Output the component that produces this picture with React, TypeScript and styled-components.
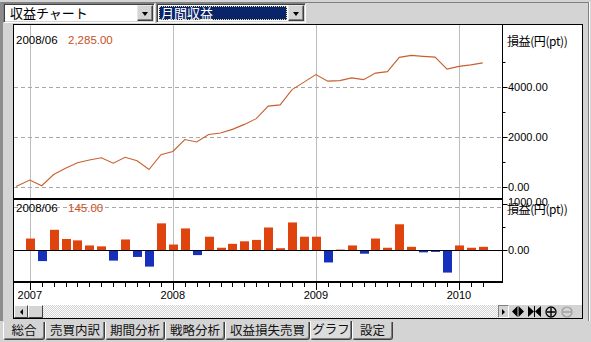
import React from 'react';
import styled, { createGlobalStyle } from 'styled-components';

const GRAY = '#d4d4d4';
const UI_FONT = `"Noto Sans CJK JP", "Liberation Sans", sans-serif`;
const NUM_FONT = `"Liberation Sans", "Noto Sans CJK JP", sans-serif`;

const GlobalStyle = createGlobalStyle`
  html, body { margin: 0; padding: 0; background: ${GRAY}; }
  #root { width: 591px; height: 342px; overflow: hidden; }
`;

const bars = [
  260, -230, 450, 250, 220, 110, 90, -220, 240, -140, -350, 590,
  130, 480, -100, 300, 60, 145, 200, 230, 500, 50, 610, 300,
  300, -260, 20, 110, -70, 260, 60, 570, 80, -40, -30, -480,
  110, 60, 80,
];

const X0 = 29.8;
const DX = 11.92;
const xm = (i: number) => X0 + DX * i;
const px = (v: number) => Math.round(v) + 0.5;
const yTop = (v: number) => 186.5 - v * 0.025;
const yBot = (v: number) => 250.5 - v * 0.046;
const AXIS_X = 502.5;
const PLOT_L = 14;
const years = [
  { i: 0, label: '2007' },
  { i: 12, label: '2008' },
  { i: 24, label: '2009' },
  { i: 36, label: '2010' },
];

const Window = styled.div`
  width: 591px;
  height: 342px;
  box-sizing: border-box;
  padding-top: 2px;
  background: ${GRAY};
  display: flex;
  flex-direction: column;
`;

const Frame = styled.div`
  width: 589px;
  height: 319px;
  box-sizing: border-box;
  border-top: 1px solid #808080;
  border-left: 3px solid #8c8c8c;
  border-right: 1px solid #808080;
  box-shadow: 1px 0 0 #fff;
  display: flex;
  flex-direction: column;
`;

const Toolbar = styled.div`
  height: 20px;
  display: flex;
  gap: 1px;
  align-items: flex-start;
`;

const Combo = styled.div<{ $w: number }>`
  width: ${(p) => p.$w}px;
  height: 20px;
  box-sizing: border-box;
  background: #fff;
  border: 1px solid;
  border-color: #808080 #fff #fff #808080;
  box-shadow: inset 1px 1px #404040, inset -1px -1px ${GRAY};
  padding: 1px;
  display: flex;
  align-items: stretch;
`;

const ComboText = styled.div<{ $selected?: boolean }>`
  flex: 1;
  margin: 1px;
  padding-left: ${(p) => (p.$selected ? 2 : 4)}px;
  font: 13px/14px ${UI_FONT};
  color: ${(p) => (p.$selected ? '#fff' : '#000')};
  background: ${(p) => (p.$selected ? '#0a246a' : 'transparent')};
  outline: ${(p) => (p.$selected ? '1px dotted #e8e0a0' : 'none')};
  outline-offset: -1px;
  display: flex;
  align-items: center;
  white-space: nowrap;
`;

const DropBtn = styled.div`
  width: 16px;
  box-sizing: border-box;
  background: ${GRAY};
  border: 1px solid;
  border-color: #e8e8e8 #404040 #404040 #e8e8e8;
  box-shadow: inset -1px -1px #808080;
  display: flex;
  align-items: center;
  justify-content: center;
`;

const Arrow = styled.span`
  width: 0;
  height: 0;
  border-left: 3.5px solid transparent;
  border-right: 3.5px solid transparent;
  border-top: 4px solid #000;
  margin-top: 1px;
`;

const ChartBox = styled.div`
  margin: 1px 0 0 10px;
  width: 570px;
  box-sizing: border-box;
  border: 1px solid #000;
  background: #fff;
  display: flex;
  flex-direction: column;
`;

const PaneSvg = styled.svg`
  display: block;
  font-family: ${NUM_FONT};
`;

const ScrollRow = styled.div`
  height: 13px;
  display: flex;
  align-items: stretch;
  background: ${GRAY};
`;

const ScrollBtn = styled.div<{ $w: number; $flat?: boolean }>`
  width: ${(p) => p.$w}px;
  box-sizing: border-box;
  background: ${GRAY};
  border: 1px solid;
  border-color: ${(p) => (p.$flat ? '#808080 #fff #fff #808080' : '#fff #404040 #404040 #fff')};
  display: flex;
  align-items: center;
  justify-content: center;
`;

const SmallArrow = styled.span<{ $dir: 'l' | 'r' }>`
  width: 0;
  height: 0;
  border-top: 3px solid transparent;
  border-bottom: 3px solid transparent;
  ${(p) => (p.$dir === 'l' ? 'border-right: 3px solid #000;' : 'border-left: 3px solid #000;')}
`;

const Track = styled.div`
  flex: 1;
  background: repeating-conic-gradient(${GRAY} 0 25%, #fff 0 50%) 0 0 / 2px 2px;
`;

const ToolIcons = styled.div`
  width: 70px;
  display: flex;
  align-items: center;
  gap: 4px;
  padding-left: 3px;
  background: ${GRAY};
`;

const TabBar = styled.div`
  height: 21px;
  display: flex;
  padding-left: 3px;
  align-items: flex-start;
`;

const Tab = styled.div<{ $w: number; $active?: boolean }>`
  width: ${(p) => p.$w}px;
  height: ${(p) => (p.$active ? 19 : 18)}px;
  margin-top: ${(p) => (p.$active ? 0 : 1)}px;
  box-sizing: border-box;
  border-left: 1px solid #fff;
  border-right: 1px solid #404040;
  border-bottom: 1px solid #404040;
  border-radius: 0 0 3px 3px;
  box-shadow: inset -1px -1px #808080;
  background: ${(p) => (p.$active ? '#dcdcdc' : GRAY)};
  font: 12.5px/16px ${UI_FONT};
  color: #111;
  text-align: center;
  white-space: nowrap;
`;

function TopChart() {
  let cum = 0;
  const pts: number[][] = [[16, yTop(0)]];
  bars.forEach((b, i) => {
    cum += b;
    pts.push([xm(i), yTop(cum)]);
  });
  const ticks = [0, 1000, 2000, 3000, 4000, 5000];
  return (
    <PaneSvg width={568} height={173} viewBox="14 25 568 173">
      {years.map((y) => (
        <line key={y.i} x1={px(xm(y.i))} x2={px(xm(y.i))} y1={25} y2={198} stroke="#bdbdbd" />
      ))}
      {[0, 2000, 4000].map((v) => (
        <line key={v} x1={PLOT_L} x2={AXIS_X} y1={px(yTop(v))} y2={px(yTop(v))} stroke="#a8a8a8" strokeDasharray="4 3" />
      ))}
      <polyline points={pts.map((p) => p.join(',')).join(' ')} fill="none" stroke="#c8602e" strokeWidth={1.1} />
      <line x1={AXIS_X} x2={AXIS_X} y1={25} y2={198} stroke="#000" />
      {ticks.map((v) => (
        <line key={v} x1={AXIS_X} x2={AXIS_X + (v % 2000 === 0 ? 5 : 3)} y1={px(yTop(v))} y2={px(yTop(v))} stroke="#000" />
      ))}
      {[0, 2000, 4000].map((v) => (
        <text key={v} x={508} y={yTop(v) + 4.5} fontSize={11}>{v.toFixed(2)}</text>
      ))}
      <text x={507} y={46} fontSize={12} fontFamily={UI_FONT} letterSpacing={-0.4}>損益(円(pt))</text>
      <text x={16} y={43.5} fontSize={11.5}>2008/06</text>
      <text x={68} y={43.5} fontSize={11.5} fill="#c8501e">2,285.00</text>
    </PaneSvg>
  );
}

function BottomChart() {
  return (
    <PaneSvg width={568} height={85} viewBox="14 198 568 85">
      {years.map((y) => (
        <line key={y.i} x1={px(xm(y.i))} x2={px(xm(y.i))} y1={198} y2={283} stroke="#bdbdbd" />
      ))}
      <line x1={PLOT_L} x2={AXIS_X} y1={207.5} y2={207.5} stroke="#a8a8a8" strokeDasharray="4 3" />
      {bars.map((b, i) => {
        const top = b >= 0 ? yBot(b) : 250.5;
        const h = Math.abs(yBot(b) - 250.5);
        return (
          <rect key={i} x={Math.round(xm(i) - 4)} y={top} width={9} height={h} fill={b >= 0 ? '#e0440e' : '#1430bc'} />
        );
      })}
      <line x1={PLOT_L} x2={AXIS_X} y1={250.5} y2={250.5} stroke="#000" />
      <rect x={PLOT_L} y={198} width={AXIS_X - PLOT_L} height={2} fill="#000" />
      <rect x={PLOT_L} y={281} width={AXIS_X - PLOT_L + 0.5} height={2} fill="#000" />
      <line x1={AXIS_X} x2={AXIS_X} y1={198} y2={283} stroke="#000" />
      <line x1={AXIS_X} x2={AXIS_X + 5} y1={250.5} y2={250.5} stroke="#000" />
      <line x1={AXIS_X} x2={AXIS_X + 3} y1={227.5} y2={227.5} stroke="#000" />
      <line x1={AXIS_X} x2={AXIS_X + 5} y1={204.5} y2={204.5} stroke="#000" />
      <text x={508} y={254} fontSize={11}>0.00</text>
      <text x={508} y={206} fontSize={11}>1000.00</text>
      <text x={507} y={214} fontSize={12} fontFamily={UI_FONT} letterSpacing={-0.4}>損益(円(pt))</text>
      <text x={16} y={212} fontSize={11.5}>2008/06</text>
      <text x={68} y={212} fontSize={11.5} fill="#c8501e">145.00</text>
    </PaneSvg>
  );
}

function XAxis() {
  return (
    <PaneSvg width={568} height={22} viewBox="14 283 568 22">
      {bars.map((_, i) => (
        <line key={i} x1={px(xm(i))} x2={px(xm(i))} y1={283} y2={i % 12 === 0 ? 290 : 287} stroke="#000" />
      ))}
      {years.map((y) => (
        <text key={y.i} x={xm(y.i)} y={298.5} fontSize={11} textAnchor="middle">{y.label}</text>
      ))}
    </PaneSvg>
  );
}

function ToolIconSet() {
  return (
    <>
      <svg width={12} height={11} viewBox="0 0 12 11">
        <path d="M0 5.5 L5.5 0 L5.5 11 Z M6.5 0 L12 5.5 L6.5 11 Z" fill="#000" />
      </svg>
      <svg width={13} height={11} viewBox="0 0 13 11">
        <path d="M0 0 L6 5.5 L0 11 Z M13 0 L7 5.5 L13 11 Z" fill="#000" />
        <rect x={6} y={0} width={1} height={11} fill="#000" />
      </svg>
      <svg width={12} height={12} viewBox="0 0 12 12">
        <circle cx={6} cy={6} r={5} fill="none" stroke="#000" strokeWidth={1.3} />
        <path d="M2 6 H10 M6 2 V10" stroke="#000" strokeWidth={1.4} />
      </svg>
      <svg width={12} height={12} viewBox="0 0 12 12">
        <circle cx={6} cy={6} r={5} fill="none" stroke="#9a9a9a" strokeWidth={1.2} />
        <path d="M2 6 H10" stroke="#9a9a9a" strokeWidth={1.3} />
      </svg>
    </>
  );
}

const tabs = [
  { label: '総合', w: 42 },
  { label: '売買内訳', w: 60 },
  { label: '期間分析', w: 60 },
  { label: '戦略分析', w: 60 },
  { label: '収益損失売買', w: 85 },
  { label: 'グラフ', w: 42, active: true },
  { label: '設定', w: 41 },
];

export default function App() {
  return (
    <>
      <GlobalStyle />
      <Window>
        <Frame>
          <Toolbar>
            <Combo $w={152}>
              <ComboText>収益チャート</ComboText>
              <DropBtn><Arrow /></DropBtn>
            </Combo>
            <Combo $w={150}>
              <ComboText $selected>月間収益</ComboText>
              <DropBtn><Arrow /></DropBtn>
            </Combo>
          </Toolbar>
          <ChartBox>
            <TopChart />
            <BottomChart />
            <XAxis />
            <ScrollRow>
              <ScrollBtn $w={14}><SmallArrow $dir="l" /></ScrollBtn>
              <ScrollBtn $w={15} />
              <Track />
              <ScrollBtn $w={11} $flat><SmallArrow $dir="r" /></ScrollBtn>
              <ToolIcons><ToolIconSet /></ToolIcons>
            </ScrollRow>
          </ChartBox>
        </Frame>
        <TabBar>
          {tabs.map((t) => (
            <Tab key={t.label} $w={t.w} $active={t.active}>{t.label}</Tab>
          ))}
        </TabBar>
      </Window>
    </>
  );
}
